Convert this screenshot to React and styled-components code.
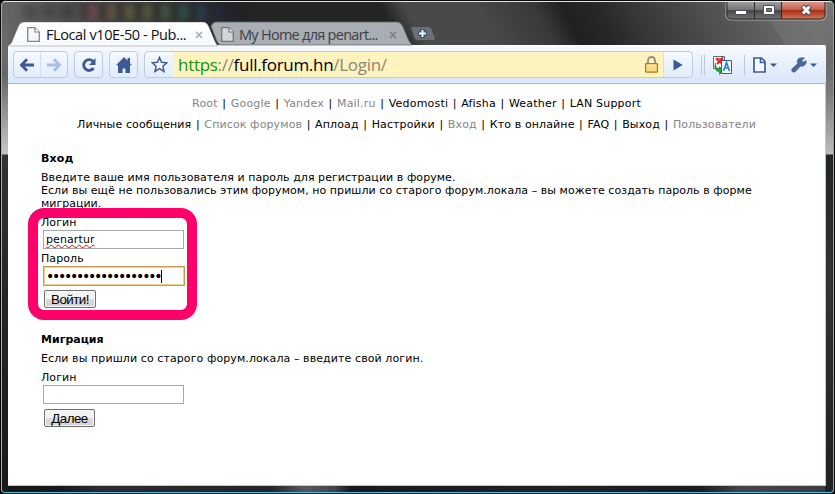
import React from "react";
import styled, { createGlobalStyle } from "styled-components";

const Global = createGlobalStyle`
  * { box-sizing: border-box; }
  html, body { margin: 0; padding: 0; overflow: hidden; background: #000; }
`;

const Frame = styled.div`
  position: relative;
  display: flex;
  flex-direction: column;
  width: 835px;
  height: 494px;
  padding: 0 9px 8px 8px;
  overflow: hidden;
  border-radius: 6px 6px 4px 4px;
  background:
    linear-gradient(#626262 0, #6b6b6b 50px, #666 75px, #aaa 130px, #c9c7c6 154px, #353331 155px, #262524 300px, #191919 494px) 0 0 / 8px 100% no-repeat,
    linear-gradient(#777 0, #6b6b6b 60px, #777 90px, #bbb 154px, #202525 155px, #303434 280px, #1d2121 494px) 100% 0 / 10px 100% no-repeat,
    linear-gradient(90deg, #171717 0, #191919 60px, #2c2c2c 100px, #242424 270px, #595959 305px, #444 335px, #191919 350px, #222 560px, #1b1b1b 700px, #454545 740px, #3b3b3b 835px) 0 100% / 100% 10px no-repeat,
    linear-gradient(57deg, transparent 0 74%, rgba(255,255,255,.05) 74.2%) 560px 0 / 275px 46px no-repeat,
    linear-gradient(62deg, #666 0, #606060 45px, #434343 105px, #353535 160px, #242424 225px, #242424 355px, #494949 376px, #484848 440px, #393939 490px, #202020 515px, #262626 540px, #363636 575px, #505050 640px, #666 700px, #707070 760px) 0 0 / 100% 46px no-repeat,
    #222;
`;

const FrameEdge = styled.div`
  position: absolute;
  inset: 0;
  pointer-events: none;
  border: 1px solid #080808;
  border-radius: 6px 6px 5px 5px;
  &::after {
    content: "";
    position: absolute;
    inset: 0;
    border: 1px solid;
    border-color: #e8e8e8 #2dc7ee #2dc7ee #aaa;
    border-radius: 5px 5px 4px 4px;
  }
`;

const Glow = styled.div`
  position: absolute;
  left: 20px;
  top: 4px;
  width: 230px;
  height: 16px;
  filter: blur(3px);
  opacity: .35;
  background: repeating-linear-gradient(90deg, transparent 0 6px, #222 7px 14px, transparent 15px 18px),
    linear-gradient(90deg, #444 0 24%, #a13e4c 27%, #b14e5c 32%, #9b7e39 41%, #93923d 51%, #589153 63%, #257d87 74%, #234a91 82%, #161643 90%, #3a0c43 97%, transparent);
`;

const TitleBar = styled.header`
  position: relative;
  display: flex;
  flex: 0 0 45px;
  align-items: flex-end;
`;

const TabBox = styled.div`
  position: relative;
  z-index: ${p => (p.$active ? 2 : 1)};
  display: flex;
  align-items: center;
  flex: 0 0 ${p => p.$w}px;
  height: 23px;
  margin-left: ${p => p.$ml}px;
  padding-left: ${p => (p.$active ? 19 : 10)}px;
  padding-top: 2px;
  & > span { margin-left: ${p => (p.$active ? 6 : 5)}px; }
`;

const TabShape = styled.svg`
  position: absolute;
  left: 0;
  top: 0;
  z-index: -1;
  overflow: visible;
`;

const TabTitle = styled.span`
  flex: 0 0 ${p => p.$w}px;
  min-width: 0;
  font: 14.5px/20px "Open Sans", sans-serif;
  letter-spacing: ${p => p.$ls}px;
  white-space: nowrap;
  color: ${p => (p.$active ? "#111" : "#3c4046")};
`;

const TabClose = styled.svg`
  flex: none;
  margin-left: ${p => p.$ml}px;
`;

const NewTab = styled.svg`
  flex: none;
  align-self: flex-end;
  margin: 0 0 4px -1px;
`;

const WindowControls = styled.svg`
  position: absolute;
  right: -4px;
  top: 0;
`;

const Toolbar = styled.div`
  display: flex;
  align-items: center;
  flex: 0 0 39px;
  padding: 0 0 0 5px;
  border-top: 1px solid #fff;
  border-bottom: 1px solid #adb8c9;
  border-radius: 0 2px 0 0;
  background: linear-gradient(#f7faff, #d8e6fa);
`;

const ToolButton = styled.div`
  display: flex;
  align-items: center;
  justify-content: center;
  flex: 0 0 ${p => p.$w}px;
  height: 27px;
  margin-right: ${p => p.$mr}px;
  border: 1px solid #bccbe5;
  border-radius: 4px;
  background: linear-gradient(#f5f9ff, #e2ecfb);
`;

const Half = styled.div`
  display: flex;
  flex: 1;
  height: 100%;
  align-items: center;
  justify-content: center;
  border-left: ${p => (p.$line ? "1px solid #d2ddef" : "0")};
`;

const Omnibox = styled.div`
  display: flex;
  align-items: stretch;
  flex: 0 0 549px;
  height: 27px;
  overflow: hidden;
  border: 1px solid #bccbe5;
  border-radius: 4px;
  background: linear-gradient(#f5f9ff, #e2ecfb);
`;

const OmniEnd = styled.div`
  display: flex;
  align-items: center;
  justify-content: center;
  flex: 0 0 28px;
`;

const Address = styled.div`
  display: flex;
  align-items: center;
  flex: 1;
  padding: 0 5px 0 5px;
  background: #fff3c0;
  border-right: 1px solid #d8dfe0;
  font: 17px/25px "Open Sans", sans-serif;
  letter-spacing: ${p => p.$ls}px;
  color: #8b8872;
  white-space: pre;
`;

const Url = styled.span` flex: 1; `;
const Scheme = styled.span` color: #109618; `;
const Host = styled.span` color: #000; `;

const Separator = styled.div`
  flex: 0 0 1px;
  height: 20px;
  margin-left: ${p => p.$ml}px;
  background: #bdc9dc;
`;

const ToolIcon = styled.svg`
  flex: none;
  margin-left: ${p => p.$ml}px;
`;

const Page = styled.main`
  position: relative;
  display: flex;
  flex-direction: column;
  flex: 1;
  padding: 13px 33px 0;
  background: #fff;
  border-right: 1px solid #bcc5d8;
  border-bottom: 1px solid #bcc5d8;
  font: 11px/13px "DejaVu Sans", Verdana, sans-serif;
  color: #000;
`;

const NavRow = styled.nav`
  display: flex;
  justify-content: center;
  height: 13px;
  margin-bottom: ${p => p.$mb}px;
  letter-spacing: ${p => p.$ls}px;
  white-space: pre;
`;

const NavLink = styled.span` color: ${p => (p.$dim ? "#858585" : "#000")}; `;
const NavDivider = styled.span` width: 13px; text-align: center; `;

const Heading = styled.h2`
  margin: 0 0 6px;
  font: bold 11px/13px "DejaVu Sans", Verdana, sans-serif;
  letter-spacing: ${p => p.$ls}px;
`;

const Line = styled.div`
  height: 13px;
  white-space: nowrap;
  letter-spacing: ${p => p.$ls}px;
`;

const Form = styled.form`
  display: flex;
  flex-direction: column;
  align-items: flex-start;
  margin: 6px 0 ${p => p.$mb || 0}px;
`;

const Label = styled.label`
  height: 13px;
  margin-bottom: 1px;
  letter-spacing: 0.1px;
`;

const Field = styled.div`
  display: flex;
  align-items: center;
  width: ${p => (p.$focus ? 142 : 141)}px;
  height: ${p => (p.$focus ? 20 : 19)}px;
  margin: ${p => (p.$focus ? "0 0 4px 2px" : "0 0 3px 2px")};
  padding-left: ${p => (p.$focus ? 2 : 2)}px;
  border: 1px solid ${p => (p.$focus ? "#c99b49" : "#a9a9ad")};
  outline: ${p => (p.$focus ? "1px solid #f2d08b" : "0")};
  outline-offset: -2px;
  letter-spacing: 0.1px;
`;

const Misspelled = styled.span`
  text-decoration: underline wavy #f00 1px;
  text-decoration-skip-ink: none;
  text-underline-offset: 1px;
`;

const Password = styled.span`
  font: 14px/16px "DejaVu Sans", sans-serif;
  letter-spacing: -2.25px;
  white-space: nowrap;
`;

const Caret = styled.span` width: 1px; height: 13px; margin-left: 1px; background: #000; `;

const Submit = styled.button`
  display: flex;
  align-items: center;
  justify-content: center;
  width: ${p => p.$w}px;
  height: 18px;
  margin: ${p => p.$mt}px 0 0 3px;
  padding: 0;
  border: 1px solid #707070;
  border-radius: 2px;
  background: linear-gradient(#f3f3f3 50%, #dddddd 50%, #d0d0d0);
  box-shadow: inset 0 0 0 1px #f8f8f8;
  font: 13.33px/15px "Liberation Sans", Arial, sans-serif;
  letter-spacing: ${p => p.$ls}px;
  color: #000;
`;

const Highlight = styled.div`
  position: absolute;
  left: 20px;
  top: 124px;
  width: 169px;
  height: 112px;
  border: 10px solid #ff006a;
  border-radius: 16px;
`;

const PageIcon = ({ dim }) => (
  <svg width="13" height="15" viewBox="0 0 13 15">
    <path d="M.7.7H8L12.3 5v9.3H.7Z" fill={dim ? "#d3d5d7" : "#f7f7f7"} stroke={dim ? "#73777b" : "#878787"} strokeWidth="1.3" />
    <path d="M8 .7V5h4.3" fill={dim ? "#eee" : "#fff"} stroke={dim ? "#73777b" : "#878787"} strokeWidth="1.2" />
  </svg>
);

const CloseX = ({ ml, color }) => (
  <TabClose $ml={ml} width="8" height="8" viewBox="0 0 8 8">
    <path d="m1 1 6 6M7 1 1 7" stroke={color} strokeWidth="1.6" />
  </TabClose>
);

const Arrow = ({ flip, color }) => (
  <svg width="16" height="14" viewBox="0 0 16 14">
    <path transform={flip ? "translate(16 0) scale(-1 1)" : undefined} d="M8 1.3 2.5 7 8 12.7M3 7h12" fill="none" stroke={color} strokeWidth="2.8" />
  </svg>
);

const Nav = ({ items, mb, ls }) => (
  <NavRow $mb={mb} $ls={ls}>
    {items.map(([text, dim], i) => (
      <React.Fragment key={text}>
        {i > 0 && <NavDivider>|</NavDivider>}
        <NavLink $dim={dim}>{text}</NavLink>
      </React.Fragment>
    ))}
  </NavRow>
);

const siteLinks = [["Root", 1], ["Google", 1], ["Yandex", 1], ["Mail.ru", 1], ["Vedomosti"], ["Afisha"], ["Weather"], ["LAN Support"]];
const forumLinks = [["Личные сообщения"], ["Список форумов", 1], ["Аплоад"], ["Настройки"], ["Вход", 1], ["Кто в онлайне"], ["FAQ"], ["Выход"], ["Пользователи", 1]];

const Controls = () => (
  <WindowControls width="107" height="22" viewBox="0 0 107 22">
    <defs>
      <linearGradient id="grey" x1="0" y1="0" x2="0" y2="1">
        <stop offset="0" stopColor="#a2a2a2" /><stop offset=".48" stopColor="#777" />
        <stop offset=".5" stopColor="#464646" /><stop offset="1" stopColor="#727272" />
      </linearGradient>
      <linearGradient id="red" x1="0" y1="0" x2="0" y2="1">
        <stop offset="0" stopColor="#dda093" /><stop offset=".48" stopColor="#c5614e" />
        <stop offset=".5" stopColor="#a72a12" /><stop offset="1" stopColor="#cf7755" />
      </linearGradient>
    </defs>
    <path d="M3 0v15q0 5 5 5h90q5 0 5-5V0" fill="none" stroke="#ccc" strokeOpacity=".7" />
    <path d="M4 1h27v18H9q-5 0-5-5Z" fill="url(#grey)" />
    <path d="M32 1h26v18H32Z" fill="url(#grey)" />
    <path d="M59 1h43v13q0 5-5 5H59Z" fill="url(#red)" />
    <path d="M4 1v13q0 5 5 5h88q5 0 5-5V1M31.500 1v18M58.500 1v18" fill="none" stroke="#292929" />
    <rect x="12.500" y="10.500" width="11" height="4" rx=".5" fill="#fff" stroke="#4d505a" />
    <path d="M40.500 5.500h11v9h-11Z" fill="#fff" stroke="#4d505a" />
    <path d="M43.500 8.500h5v3h-5Z" fill="#777" stroke="#4d505a" />
    <path d="m79.500 6 7.500 8M87 6l-7.500 8" stroke="#4c4550" strokeWidth="5" />
    <path d="m80 6.500 6.500 7M86.500 6.500l-6.500 7" stroke="#fff" strokeWidth="2.900" />
  </WindowControls>
);

export default function App() {
  return (
    <>
      <Global />
      <Frame>
        <Glow />
        <TitleBar>
          <TabBox $active $w={207} $ml={0}>
            <TabShape width="207" height="24" viewBox="0 0 207 24">
              <defs>
                <linearGradient id="tab" x1="0" y1="0" x2="0" y2="1">
                  <stop offset="0" stopColor="#fff" /><stop offset="1" stopColor="#f6faff" />
                </linearGradient>
              </defs>
              <path d="M0 24c3-2 4-4 5-7l5-12q2-5 6-5h179q4 0 6 5l5 12q2 5 4 7Z" fill="url(#tab)" stroke="#39393988" strokeWidth=".6" />
            </TabShape>
            <PageIcon />
            <TabTitle $active $w={143} $ls={-0.4}>FLocal v10E-50 - Pub...</TabTitle>
            <CloseX ml={6} color="#a9adb2" />
          </TabBox>
          <TabBox $w={200} $ml={-4}>
            <TabShape width="202" height="24" viewBox="0 0 202 24">
              <path d="M0 4q2-4 5-4h181q4 0 6 5l5 12q2 4 4 6H9q-3-2-4-6Z" fill="#a9aeb4" stroke="#63676c" strokeWidth=".8" />
            </TabShape>
            <PageIcon dim />
            <TabTitle $w={142} $ls={-0.72}>My Home для penart...</TabTitle>
            <CloseX ml={8} color="#7a7f84" />
          </TabBox>
          <NewTab width="26" height="15" viewBox="0 0 26 15">
            <path d="M.5 1Q1 .5 3 .5h16q2 0 3 3l3 8q1 3-1 3H8q-3 0-4-3Z" fill="#6d7073" stroke="#45474a" />
            <path d="M12.500 3v9M8 7.500h9" stroke="#344f79" strokeWidth="4.500" />
            <path d="M12.500 4v7M9 7.500h7" stroke="#f4f7ff" strokeWidth="2" />
          </NewTab>
          <Controls />
        </TitleBar>

        <Toolbar>
          <ToolButton $w={55} $mr={6}>
            <Half><Arrow color="#3b5b96" /></Half>
            <Half $line><Arrow flip color="#a9bee3" /></Half>
          </ToolButton>
          <ToolButton $w={29} $mr={6}>
            <svg width="16" height="16" viewBox="0 0 16 16">
              <path d="M12.500 11.200A5.400 5.400 0 1 1 12.200 4.500" fill="none" stroke="#3b5b96" strokeWidth="2.900" />
              <path d="M14.500 1v7H8Z" fill="#3b5b96" />
            </svg>
          </ToolButton>
          <ToolButton $w={29} $mr={6}>
            <svg width="16" height="16" viewBox="0 0 16 16">
              <path d="M8 0 0 8.200h2V16h4.600v-4.500h2.800V16H14V8.200h2l-2-2V1h-2.500v2.600Z" fill="#3b5b96" />
            </svg>
          </ToolButton>
          <Omnibox>
            <OmniEnd>
              <svg width="17" height="17" viewBox="0 0 17 17">
                <path d="m8.500 1.500 2.100 4.800 5.200.5-3.900 3.500 1.100 5.100-4.500-2.700L4 15.400l1.100-5.100-3.900-3.500 5.200-.5Z" fill="#f5f9ff" stroke="#3b5b96" strokeWidth="1.500" />
              </svg>
            </OmniEnd>
            <Address $ls={-0.3}>
              <Url><Scheme>https</Scheme>://<Host>full.forum.hn</Host>/Login/</Url>
              <svg width="13" height="17" viewBox="0 0 13 17">
                <path d="M3 8V5q0-4 3.500-4T10 5v3" fill="none" stroke="#8f8f86" strokeWidth="1.800" />
                <rect x=".6" y="7.600" width="11.800" height="8.500" rx=".7" fill="#ffd77f" stroke="#ae7917" strokeWidth="1.200" />
                <path d="M2 9.200h9" stroke="#fff0bd" />
              </svg>
            </Address>
            <OmniEnd>
              <svg width="10" height="12" viewBox="0 0 10 12"><path d="M.5.500 9.700 6 .5 11.500Z" fill="#3b5b96" /></svg>
            </OmniEnd>
          </Omnibox>
          <Separator $ml={8} />
          <Separator $ml={2} />
          <ToolIcon $ml={8} width="20" height="20" viewBox="0 0 20 20">
            <path d="M.5 1.500h11v12H.5Z" fill="#f7f7f7" stroke="#686f7c" />
            <path d="m3 3 3 4 4-5M9.500 4 4 9M3 4h7M6 6l3 3" fill="none" stroke="#ed2025" strokeWidth="1.700" />
            <path d="M2.500 8q-.5 5 4 6v-2.500l4 4.200-4 3.800V17Q0 15.500 2.500 8Z" fill="#22ab31" stroke="#137b24" strokeWidth=".6" />
            <path d="M8.500 5.500h10v13h-10Z" fill="#fff" stroke="#415989" />
            <path d="m10.500 16 3-8.500 3 8.500M11.700 13h3.700" fill="none" stroke="#1787ec" strokeWidth="1.700" />
          </ToolIcon>
          <Separator $ml={11} />
          <ToolIcon $ml={8} width="25" height="16" viewBox="0 0 25 16">
            <path d="M1 1h7.500L12 4.500V15H1Z" fill="#f4f8ff" stroke="#3b5b96" strokeWidth="1.700" />
            <path d="M7.500 1v4.500H12" fill="none" stroke="#3b5b96" strokeWidth="1.600" />
            <path d="M17 6.500h7L20.500 10Z" fill="#3b5b96" />
          </ToolIcon>
          <ToolIcon $ml={13} width="27" height="16" viewBox="0 0 27 16">
            <path d="M13.500 1 10.800 3.700l1.300 1.600L15 3.500q.9 3.800-2 5.300-1.500.8-3.500.2l-5 5.500q-1.700 1.500-3.300.1-1.300-1.600.1-3.100l5.400-5Q5.500 3.600 7.500 1.600 10 .1 13.500 1Z" fill="#49699f" stroke="#304f8a" strokeWidth=".5" />
            <path d="M19 6.500h7L22.500 10Z" fill="#3b5b96" />
          </ToolIcon>
        </Toolbar>

        <Page>
          <Nav items={siteLinks} mb={8} ls={0.2} />
          <Nav items={forumLinks} mb={21} ls={0.12} />
          <Heading $ls={0.15}>Вход</Heading>
          <Line $ls={0.05}>Введите ваше имя пользователя и пароль для регистрации в форуме.</Line>
          <Line $ls={0.055}>Если вы ещё не пользовались этим форумом, но пришли со старого форум.локала – вы можете создать пароль в форме</Line>
          <Line $ls={0}>миграции.</Line>
          <Form $mb={25}>
            <Label>Логин</Label>
            <Field><Misspelled>penartur</Misspelled></Field>
            <Label>Пароль</Label>
            <Field $focus><Password>•••••••••••••••••••</Password><Caret /></Field>
            <Submit type="button" $w={52} $mt={0} $ls={-0.5}>Войти!</Submit>
          </Form>
          <Heading $ls={0}>Миграция</Heading>
          <Line $ls={0.09}>Если вы пришли со старого форум.локала – введите свой логин.</Line>
          <Form>
            <Label>Логин</Label>
            <Field />
            <Submit type="button" $w={51} $mt={2} $ls={-0.5}>Далее</Submit>
          </Form>
          <Highlight />
        </Page>
        <FrameEdge />
      </Frame>
    </>
  );
}
